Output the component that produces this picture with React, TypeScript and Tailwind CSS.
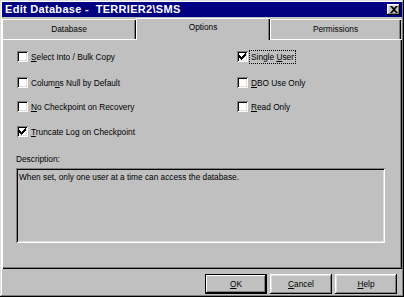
import type { ReactNode } from "react";

const raised =
  "shadow-[inset_-1px_-1px_0_#000,inset_1px_1px_0_#fff,inset_-2px_-2px_0_#808080,inset_2px_2px_0_#dfdfdf]";

function Check({ checked }: { checked?: boolean }) {
  return (
    <span className="flex h-[11px] w-[11px] shrink-0 items-center justify-center bg-white shadow-[inset_1px_1px_0_#808080,inset_-1px_-1px_0_#fff,inset_2px_2px_0_#000,inset_-2px_-2px_0_#dfdfdf]">
      {checked && (
        <svg width="7" height="7" viewBox="0 0 7 7">
          <path d="M0 2h1v1h1v1h1v-1h1v-1h1v-1h1v-1h1v3h-1v1h-1v1h-1v1h-1v1h-1v-1h-1v-1h-1z" fill="#000" />
        </svg>
      )}
    </span>
  );
}

function Option({
  checked,
  focused,
  children,
}: {
  checked?: boolean;
  focused?: boolean;
  children: ReactNode;
}) {
  return (
    <div className="flex h-[13px] items-center gap-[2px]">
      <Check checked={checked} />
      <span
        className={`px-[1px] leading-[12px] ${focused ? "outline outline-1 outline-dotted outline-black" : ""}`}
      >
        {children}
      </span>
    </div>
  );
}

function Tab({ label, active, w }: { label: string; active?: boolean; w: string }) {
  return (
    <div
      className={`${w} flex items-center justify-center ${
        active
          ? "relative z-10 h-[22px] -mb-[1px] bg-[#c0c0c0] shadow-[inset_1px_1px_0_#fff,inset_-1px_0_0_#000,inset_-2px_0_0_#808080]"
          : "h-[20px] shadow-[inset_1px_1px_0_#fff,inset_-1px_0_0_#000,inset_-2px_0_0_#808080]"
      }`}
    >
      <span className={active ? "-mt-[3px]" : ""}>{label}</span>
    </div>
  );
}

function Button({ children, def }: { children: ReactNode; def?: boolean }) {
  return (
    <div
      className={`flex h-[20px] w-[62px] items-center justify-center ${
        def
          ? "shadow-[inset_0_0_0_1px_#000,inset_-2px_-2px_0_#000,inset_2px_2px_0_#fff,inset_-3px_-3px_0_#808080]"
          : raised
      }`}
    >
      {children}
    </div>
  );
}

export default function App() {
  return (
    <div
      className="flex h-[297px] w-[404px] flex-col bg-[#c0c0c0] p-[2px] text-[8.3px] text-black shadow-[inset_-1px_-1px_0_#000,inset_1px_1px_0_#dfdfdf,inset_-2px_-2px_0_#808080,inset_2px_2px_0_#fff]"
      style={{ fontFamily: '"Liberation Sans", Arial, sans-serif' }}
    >
      <div className="flex h-[15px] items-center justify-between bg-[#000080] pl-[3px] pr-[2px]">
        <span className="text-[11px] font-bold tracking-[0.3px] text-white">
          Edit Database -&nbsp; TERRIER2\SMS
        </span>
        <div className={`flex h-[11px] w-[13px] items-center justify-center bg-[#c0c0c0] ${raised}`}>
          <svg width="8" height="7" viewBox="0 0 8 7">
            <path d="M0 0h2l2 2 2-2h2l-3 3.5 3 3.5h-2l-2-2-2 2h-2l3-3.5z" fill="#000" />
          </svg>
        </div>
      </div>

      <div className="mt-[2px] flex h-[20px] items-end">
        <Tab label="Database" w="w-[134px]" />
        <Tab label="Options" w="w-[134px]" active />
        <Tab label="Permissions" w="w-[131px]" />
      </div>

      <div className="flex h-[230px] flex-col px-[14px] shadow-[inset_1px_1px_0_#fff,inset_-1px_-1px_0_#000,inset_-2px_-2px_0_#808080]">
        <div className="mt-[11px] grid grid-cols-[220px_1fr] pl-[1px]">
          <div className="flex flex-col">
            <Option>
              <u>S</u>elect Into / Bulk Copy
            </Option>
            <div className="mt-[13px]">
              <Option>
                Colum<u>n</u>s Null by Default
              </Option>
            </div>
            <div className="mt-[11px]">
              <Option>
                <u>N</u>o Checkpoint on Recovery
              </Option>
            </div>
            <div className="mt-[12px]">
              <Option checked>
                <u>T</u>runcate Log on Checkpoint
              </Option>
            </div>
          </div>
          <div className="flex flex-col">
            <Option checked focused>
              Single <u>U</u>ser
            </Option>
            <div className="mt-[13px]">
              <Option>
                <u>D</u>BO Use Only
              </Option>
            </div>
            <div className="mt-[11px]">
              <Option>
                <u>R</u>ead Only
              </Option>
            </div>
          </div>
        </div>

        <div className="mt-[15px] leading-[13px]">Description:</div>
        <div className="mt-[2px] h-[75px] w-[369px] px-[3px] py-[3px] leading-[12px] shadow-[inset_1px_1px_0_#808080,inset_-1px_-1px_0_#fff,inset_2px_2px_0_#000,inset_-2px_-2px_0_#dfdfdf]">
          When set, only one user at a time can access the database.
        </div>
      </div>

      <div className="mt-[5px] flex justify-end gap-[3px] pr-[5px]">
        <Button def>
          <u>O</u>K
        </Button>
        <Button>
          <u>C</u>ancel
        </Button>
        <Button>
          <u>H</u>elp
        </Button>
      </div>
    </div>
  );
}
